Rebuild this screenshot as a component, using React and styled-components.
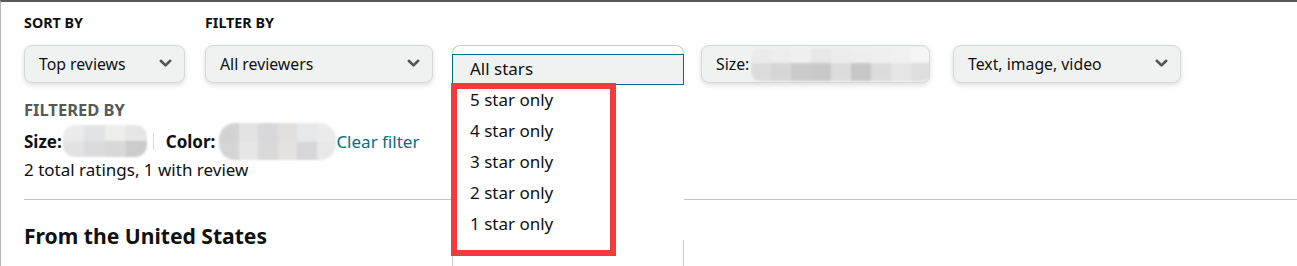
import React from "react";
import styled, { createGlobalStyle } from "styled-components";

const Global = createGlobalStyle`
  html, body { margin: 0; padding: 0; overflow: hidden; background: #fff; }
  body { font-family: "Noto Sans", "Liberation Sans", Arial, sans-serif; color: #0F1111; }
  * { box-sizing: border-box; }
`;

const Page = styled.div`
  position: relative;
  width: 1297px;
  height: 266px;
  border-top: 2px solid #5b5b5b;
  border-left: 1px solid #b5b5b5;
  padding: 12px 0 0 23px;
  overflow: hidden;
`;

const Controls = styled.div`
  display: flex;
  align-items: flex-end;
`;

const Field = styled.div`
  display: flex;
  flex-direction: column;
  width: ${(p) => p.$w}px;
  margin-left: ${(p) => p.$ml || 0}px;
  position: relative;
`;

const Label = styled.div`
  font-size: ${(p) => p.$fs || 14.3}px;
  font-weight: 700;
  line-height: 18px;
  color: ${(p) => (p.$muted ? "#565959" : "#0F1111")};
  margin-bottom: ${(p) => p.$mb ?? 13}px;
`;

const Select = styled.div`
  height: 38px;
  display: flex;
  align-items: center;
  justify-content: space-between;
  padding: 0 ${(p) => (p.$noChevron ? 0 : 12)}px 1px 14px;
  background: #F0F2F2;
  border: 1px solid #D5D9D9;
  border-radius: 8px;
  box-shadow: 0 2px 5px rgba(15, 17, 17, 0.15);
  font-size: 15.8px;
  color: #0F1111;
  overflow: hidden;
  white-space: nowrap;
`;

const SelectText = styled.span`
  display: flex;
  align-items: center;
`;

const Placeholder = styled.div`
  height: 38px;
`;

const Chevron = () => (
  <svg width="13" height="9" viewBox="0 0 13 9" aria-hidden="true">
    <path d="M1.8 1.8 L6.5 6.4 L11.2 1.8" fill="none" stroke="#555" strokeWidth="2.6" strokeLinecap="round" strokeLinejoin="round" />
  </svg>
);

const MosaicWrap = styled.div`
  display: grid;
  grid-template-columns: repeat(${(p) => p.$cols}, ${(p) => p.$cw}px);
  grid-template-rows: ${(p) => p.$rows};
  border-radius: ${(p) => p.$r}px;
  overflow: hidden;
  filter: blur(0.8px);
  margin: ${(p) => p.$m || "0"};
`;

const Cell = styled.div`
  background: ${(p) => p.$c};
`;

const Mosaic = ({ top, bottom, cw, rows, r, m }) => (
  <MosaicWrap $cols={top.length} $cw={cw} $rows={rows} $r={r} $m={m}>
    {top.map((c, i) => (
      <Cell key={"t" + i} $c={c} />
    ))}
    {bottom.map((c, i) => (
      <Cell key={"b" + i} $c={c} />
    ))}
  </MosaicWrap>
);

const Popover = styled.div`
  position: absolute;
  left: 0;
  top: 0;
  width: 232px;
  height: 260px;
  background: #fff;
  border: 1px solid #C9CCCC;
  border-bottom: none;
  border-radius: 8px 8px 0 0;
  padding-top: 8px;
  z-index: 2;
`;

const Option = styled.div`
  height: 31px;
  display: flex;
  align-items: center;
  padding: 0 0 2px 17px;
  font-size: 17px;
  color: #0F1111;
  margin: 0 -1px;
  background: ${(p) => (p.$active ? "#F0F2F2" : "#fff")};
  border: 1px solid ${(p) => (p.$active ? "#007185" : "transparent")};
`;

const Annotation = styled.div`
  position: absolute;
  left: 450px;
  top: 81px;
  width: 165px;
  height: 173px;
  border: 6px solid #F23C3C;
  z-index: 3;
`;

const Filtered = styled.div`
  margin-top: 18px;
`;

const FilterRow = styled.div`
  display: flex;
  align-items: center;
  height: 36px;
  margin-top: 4px;
  font-size: 17px;
`;

const Key = styled.span`
  font-weight: 700;
`;

const Divider = styled.span`
  width: 1px;
  height: 17px;
  background: #D5D9D9;
  margin: 0 12px 0 6px;
`;

const Link = styled.a`
  color: #007185;
  text-decoration: none;
  font-size: 17px;
`;

const Summary = styled.div`
  font-size: 17px;
  line-height: 20px;
  margin-top: 1px;
`;

const Rule = styled.hr`
  border: none;
  border-top: 1px solid #C4C4C4;
  margin: 19px 0 0 0;
`;

const Heading = styled.h2`
  font-size: 21.1px;
  font-weight: 700;
  line-height: 28px;
  margin: 22px 0 0 0;
`;

const stars = ["All stars", "5 star only", "4 star only", "3 star only", "2 star only", "1 star only"];

export default function App() {
  return (
    <>
      <Global />
      <Page>
        <Controls>
          <Field $w={161}>
            <Label>SORT BY</Label>
            <Select>
              <SelectText>Top reviews</SelectText>
              <Chevron />
            </Select>
          </Field>
          <Field $w={228} $ml={20}>
            <Label>FILTER BY</Label>
            <Select>
              <SelectText>All reviewers</SelectText>
              <Chevron />
            </Select>
          </Field>
          <Field $w={232} $ml={19}>
            <Placeholder />
            <Popover>
              {stars.map((s, i) => (
                <Option key={s} $active={i === 0}>
                  {s}
                </Option>
              ))}
            </Popover>
          </Field>
          <Field $w={229} $ml={17}>
            <Select $noChevron>
              <SelectText>
                Size:
                <Mosaic
                  cw={20}
                  rows="15px 18px"
                  r={9}
                  m="1px 0 0 2px"
                  top={["#ebebeb", "#ededed", "#f0f0f0", "#e8e8e8", "#ececec", "#eeeeee", "#efefef", "#f1f1f1", "#f5f5f5"]}
                  bottom={["#dcdcdc", "#d6d6d6", "#cbcbcb", "#c9c9c9", "#dcdcdc", "#c7c7c7", "#dcdcdc", "#e6e6e6", "#dedede"]}
                />
              </SelectText>
            </Select>
          </Field>
          <Field $w={228} $ml={23}>
            <Select>
              <SelectText>Text, image, video</SelectText>
              <Chevron />
            </Select>
          </Field>
        </Controls>

        <Filtered>
          <Label $muted $mb={0} $fs={16.5}>FILTERED BY</Label>
          <FilterRow>
            <Key>Size:</Key>
            <Mosaic
              cw={21}
              rows="16px 16px"
              r={12}
              m="0 0 0 1px"
              top={["#ebebeb", "#e2e3e5", "#eeeeec", "#e6e6e6"]}
              bottom={["#e2e2e2", "#dadbdd", "#d8d8d8", "#cbcbcb"]}
            />
            <Divider />
            <Key>Color:</Key>
            <Mosaic
              cw={19.5}
              rows="19px 18px"
              r={16}
              m="0 0 0 4px"
              top={["#d3d3d3", "#e3e3e3", "#d8d8da", "#e2e0de", "#e6e8ea", "#ebebeb"]}
              bottom={["#d5d5d5", "#e6e6e6", "#d9d9d9", "#e3e2e0", "#d7d7d9", "#e8e8e8"]}
            />
            <Link href="#">Clear filter</Link>
          </FilterRow>
          <Summary>2 total ratings, 1 with review</Summary>
        </Filtered>

        <Rule />
        <Heading>From the United States</Heading>

        <Annotation />
      </Page>
    </>
  );
}
